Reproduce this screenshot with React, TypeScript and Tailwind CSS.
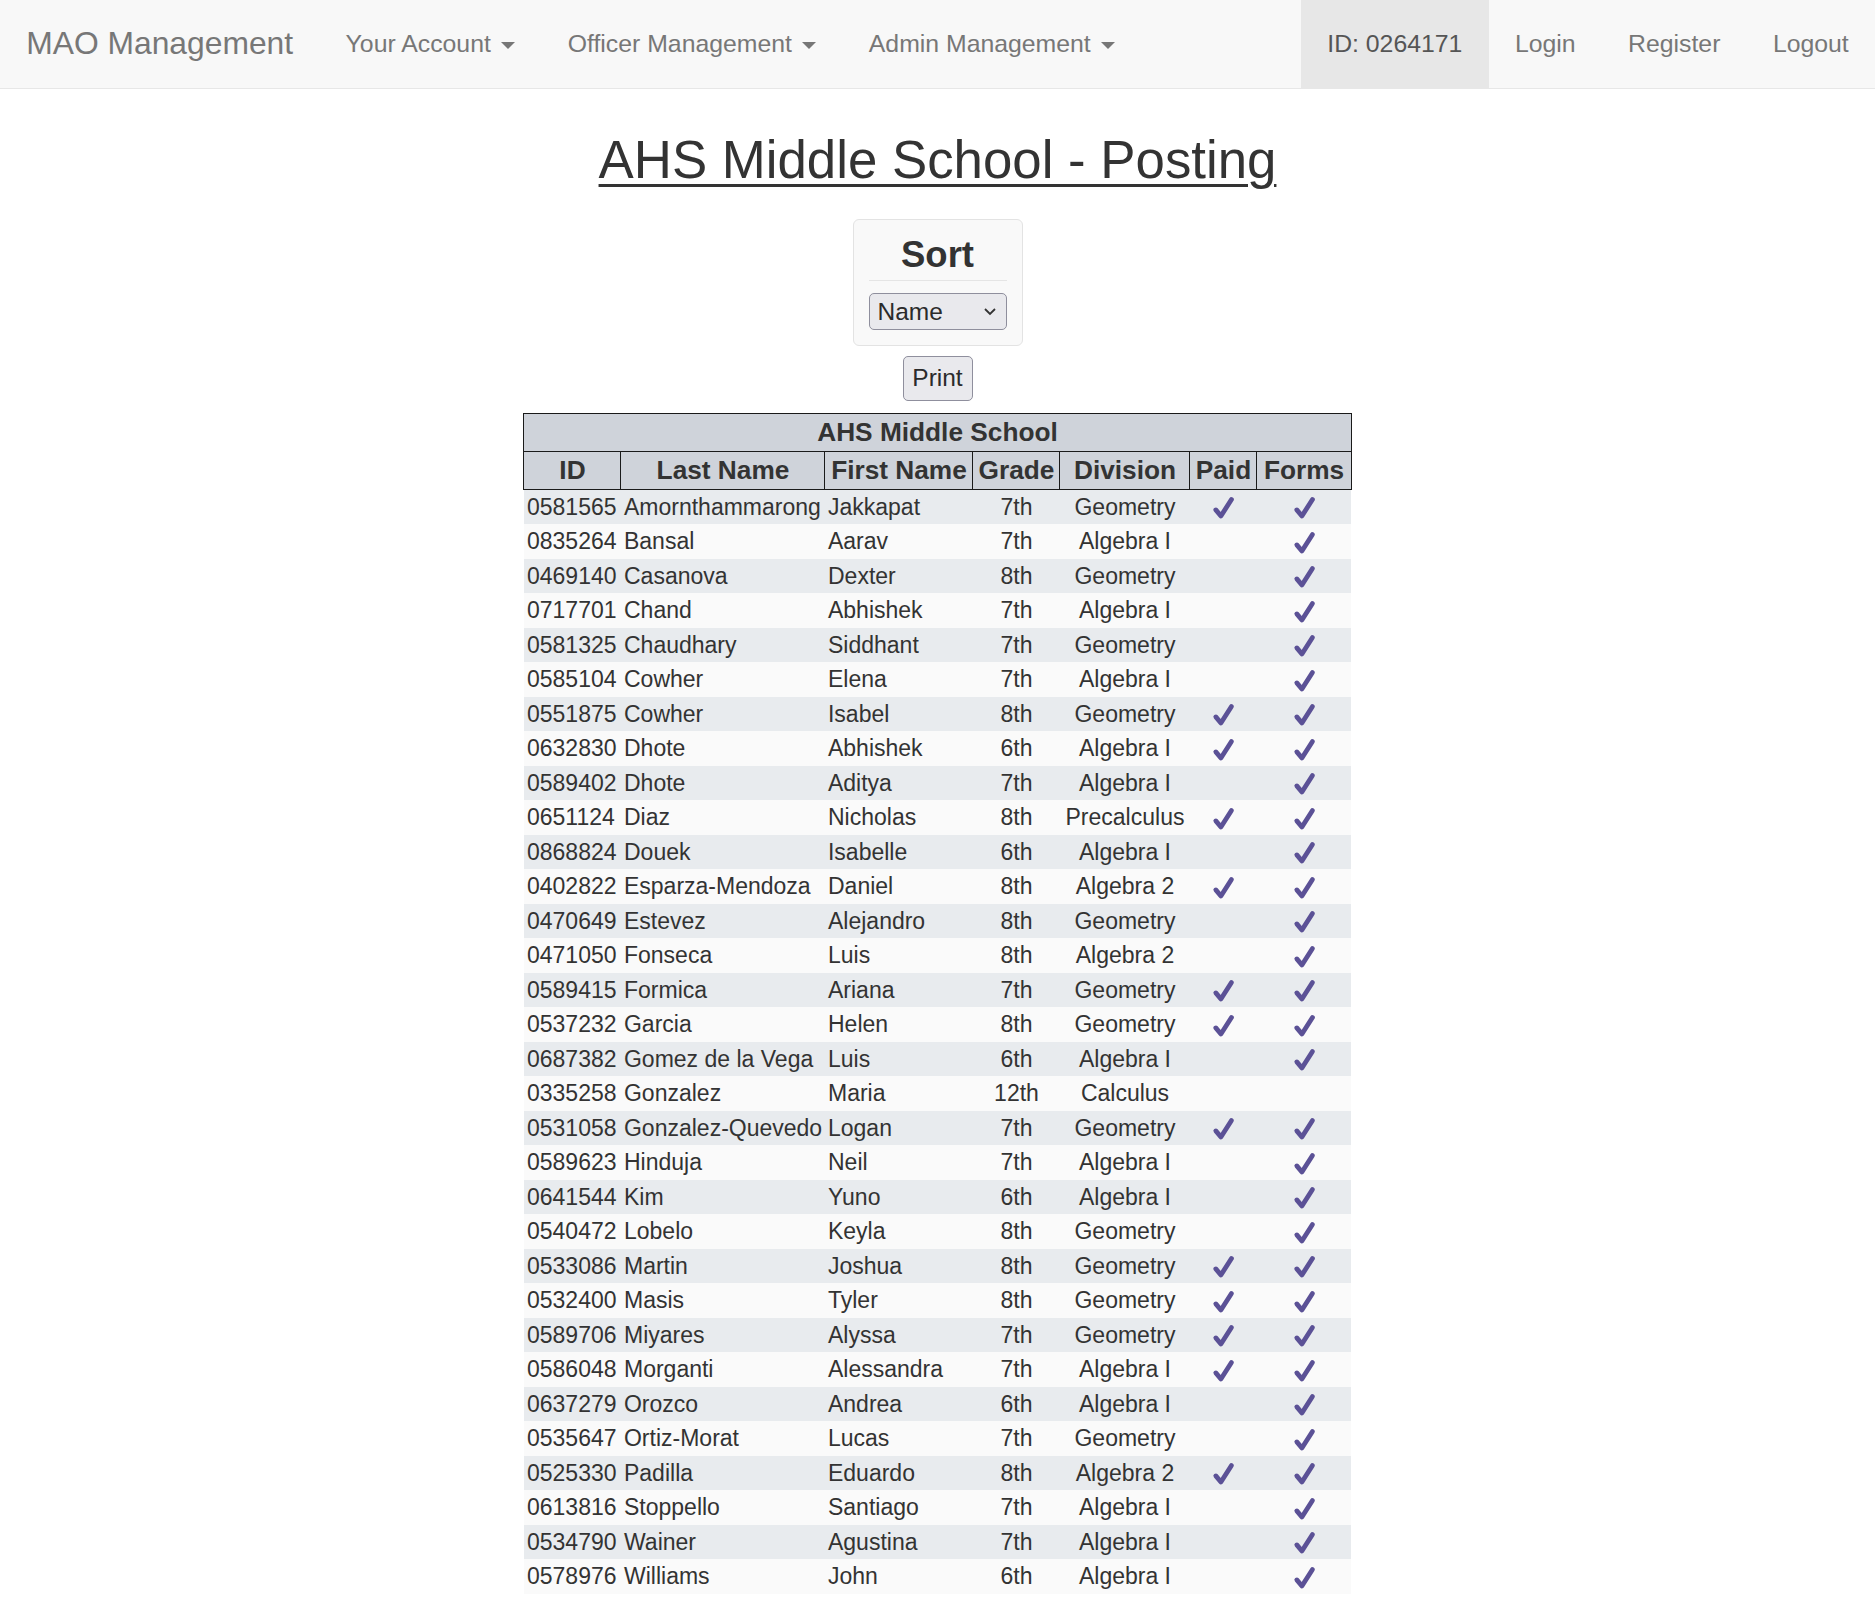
import React from "react";

type Student = {
  id: string;
  last: string;
  first: string;
  grade: string;
  division: string;
  paid: boolean;
  forms: boolean;
};

const students: Student[] = [
  { id: "0581565", last: "Amornthammarong", first: "Jakkapat", grade: "7th", division: "Geometry", paid: true, forms: true },
  { id: "0835264", last: "Bansal", first: "Aarav", grade: "7th", division: "Algebra I", paid: false, forms: true },
  { id: "0469140", last: "Casanova", first: "Dexter", grade: "8th", division: "Geometry", paid: false, forms: true },
  { id: "0717701", last: "Chand", first: "Abhishek", grade: "7th", division: "Algebra I", paid: false, forms: true },
  { id: "0581325", last: "Chaudhary", first: "Siddhant", grade: "7th", division: "Geometry", paid: false, forms: true },
  { id: "0585104", last: "Cowher", first: "Elena", grade: "7th", division: "Algebra I", paid: false, forms: true },
  { id: "0551875", last: "Cowher", first: "Isabel", grade: "8th", division: "Geometry", paid: true, forms: true },
  { id: "0632830", last: "Dhote", first: "Abhishek", grade: "6th", division: "Algebra I", paid: true, forms: true },
  { id: "0589402", last: "Dhote", first: "Aditya", grade: "7th", division: "Algebra I", paid: false, forms: true },
  { id: "0651124", last: "Diaz", first: "Nicholas", grade: "8th", division: "Precalculus", paid: true, forms: true },
  { id: "0868824", last: "Douek", first: "Isabelle", grade: "6th", division: "Algebra I", paid: false, forms: true },
  { id: "0402822", last: "Esparza-Mendoza", first: "Daniel", grade: "8th", division: "Algebra 2", paid: true, forms: true },
  { id: "0470649", last: "Estevez", first: "Alejandro", grade: "8th", division: "Geometry", paid: false, forms: true },
  { id: "0471050", last: "Fonseca", first: "Luis", grade: "8th", division: "Algebra 2", paid: false, forms: true },
  { id: "0589415", last: "Formica", first: "Ariana", grade: "7th", division: "Geometry", paid: true, forms: true },
  { id: "0537232", last: "Garcia", first: "Helen", grade: "8th", division: "Geometry", paid: true, forms: true },
  { id: "0687382", last: "Gomez de la Vega", first: "Luis", grade: "6th", division: "Algebra I", paid: false, forms: true },
  { id: "0335258", last: "Gonzalez", first: "Maria", grade: "12th", division: "Calculus", paid: false, forms: false },
  { id: "0531058", last: "Gonzalez-Quevedo", first: "Logan", grade: "7th", division: "Geometry", paid: true, forms: true },
  { id: "0589623", last: "Hinduja", first: "Neil", grade: "7th", division: "Algebra I", paid: false, forms: true },
  { id: "0641544", last: "Kim", first: "Yuno", grade: "6th", division: "Algebra I", paid: false, forms: true },
  { id: "0540472", last: "Lobelo", first: "Keyla", grade: "8th", division: "Geometry", paid: false, forms: true },
  { id: "0533086", last: "Martin", first: "Joshua", grade: "8th", division: "Geometry", paid: true, forms: true },
  { id: "0532400", last: "Masis", first: "Tyler", grade: "8th", division: "Geometry", paid: true, forms: true },
  { id: "0589706", last: "Miyares", first: "Alyssa", grade: "7th", division: "Geometry", paid: true, forms: true },
  { id: "0586048", last: "Morganti", first: "Alessandra", grade: "7th", division: "Algebra I", paid: true, forms: true },
  { id: "0637279", last: "Orozco", first: "Andrea", grade: "6th", division: "Algebra I", paid: false, forms: true },
  { id: "0535647", last: "Ortiz-Morat", first: "Lucas", grade: "7th", division: "Geometry", paid: false, forms: true },
  { id: "0525330", last: "Padilla", first: "Eduardo", grade: "8th", division: "Algebra 2", paid: true, forms: true },
  { id: "0613816", last: "Stoppello", first: "Santiago", grade: "7th", division: "Algebra I", paid: false, forms: true },
  { id: "0534790", last: "Wainer", first: "Agustina", grade: "7th", division: "Algebra I", paid: false, forms: true },
  { id: "0578976", last: "Williams", first: "John", grade: "6th", division: "Algebra I", paid: false, forms: true },
];

// heavy check mark like the ✔ glyph
const Check: React.FC = () => (
  <svg width="23" height="24" viewBox="0 0 24 24" className="inline-block align-middle">
    <polyline
      points="4,14 9.3,20.3 20.3,3.2"
      fill="none"
      stroke="#5b5196"
      strokeWidth="5"
      strokeLinecap="round"
      strokeLinejoin="round"
    />
  </svg>
);

const Caret: React.FC = () => (
  <span className="ml-[3.5px] inline-block h-0 w-0 border-x-[7px] border-t-[7px] border-x-transparent border-t-[#777] align-middle" />
);

const NavDrop: React.FC<{ label: string }> = ({ label }) => (
  <a href="#" className="block px-[26.25px] py-[26.25px] leading-[35px] text-[#777]">
    {label} <Caret />
  </a>
);

const App: React.FC = () => {
  return (
    <div
      className="min-h-screen bg-white text-[#333]"
      style={{ fontFamily: '"Liberation Sans", Arial, sans-serif' }}
    >
      <nav className="flex h-[88.5px] items-start justify-between border-b border-[#e7e7e7] bg-[#f8f8f8] text-[24.8px]">
        <div className="flex">
          <a href="#" className="block h-[87.5px] px-[26.25px] py-[26.25px] text-[31.8px] leading-[35px] text-[#777]">
            MAO Management
          </a>
          <NavDrop label="Your Account" />
          <NavDrop label="Officer Management" />
          <NavDrop label="Admin Management" />
        </div>
        <div className="flex">
          <span className="block bg-[#e7e7e7] px-[26.25px] py-[26.25px] leading-[35px] text-[#555]">
            ID: 0264171
          </span>
          <a href="#" className="block px-[26.25px] py-[26.25px] leading-[35px] text-[#777]">Login</a>
          <a href="#" className="block px-[26.25px] py-[26.25px] leading-[35px] text-[#777]">Register</a>
          <a href="#" className="block px-[26.25px] py-[26.25px] leading-[35px] text-[#777]">Logout</a>
        </div>
      </nav>

      <div className="flex flex-col items-center">
        <h2 className="mt-[42.5px] text-[52.8px] leading-[1.1] underline decoration-[3px] underline-offset-[6px]">
          AHS Middle School - Posting
        </h2>

        <div className="mt-[29.5px] w-[170px] rounded-[6px] border border-[#e3e3e3] bg-[#f9f9f9] p-[15px]">
          <div className="text-center text-[36.5px] font-bold leading-[40px]">Sort</div>
          <div className="mt-[5px] border-t border-[#e5e5e5]" />
          <div className="relative mt-[12px]">
            <select className="h-[37px] w-full appearance-none rounded-[5px] border border-[#8f8f9d] bg-[#e9e9ed] pl-[8px] text-[24.5px] text-[#2b2b2b]">
              <option>Name</option>
            </select>
            <svg
              width="14"
              height="10"
              viewBox="0 0 14 10"
              className="pointer-events-none absolute right-[10px] top-[14px]"
            >
              <polyline points="2,2 7,7 12,2" fill="none" stroke="#333" strokeWidth="1.8" />
            </svg>
          </div>
        </div>

        <button className="mt-[10px] h-[45px] w-[70px] rounded-[5px] border border-[#8f8f9d] bg-[#e9e9ed] text-[24.5px] text-[#2b2b2b]">
          Print
        </button>

        <table className="mt-[12px] w-[827px] table-fixed border-collapse">
          <colgroup>
            <col className="w-[97px]" />
            <col className="w-[204px]" />
            <col className="w-[148px]" />
            <col className="w-[87px]" />
            <col className="w-[130px]" />
            <col className="w-[67px]" />
            <col className="w-[94px]" />
          </colgroup>
          <thead className="bg-[#cfd3da] text-[26.25px] font-bold leading-[37px]">
            <tr>
              <th colSpan={7} className="border-[1.75px] border-[#1a1a1a] text-center">
                AHS Middle School
              </th>
            </tr>
            <tr>
              <th className="border-[1.75px] border-[#1a1a1a] text-center">ID</th>
              <th className="border-[1.75px] border-[#1a1a1a] text-center">Last Name</th>
              <th className="border-[1.75px] border-[#1a1a1a] text-center whitespace-nowrap">First Name</th>
              <th className="border-[1.75px] border-[#1a1a1a] text-center">Grade</th>
              <th className="border-[1.75px] border-[#1a1a1a] text-center">Division</th>
              <th className="border-[1.75px] border-[#1a1a1a] text-center">Paid</th>
              <th className="border-[1.75px] border-[#1a1a1a] text-center">Forms</th>
            </tr>
          </thead>
          <tbody className="text-[23px] leading-[34.5px]">
            {students.map((s, i) => (
              <tr key={s.id} className={i % 2 === 0 ? "bg-[#e8ebee]" : "bg-[#fafafa]"}>
                <td className="h-[34.5px] whitespace-nowrap px-[3px] py-0">{s.id}</td>
                <td className="whitespace-nowrap px-[3px] py-0">{s.last}</td>
                <td className="whitespace-nowrap px-[3px] py-0">{s.first}</td>
                <td className="px-[3px] py-0 text-center">{s.grade}</td>
                <td className="whitespace-nowrap px-[3px] py-0 text-center">{s.division}</td>
                <td className="px-[3px] py-0 text-center">{s.paid ? <Check /> : null}</td>
                <td className="px-[3px] py-0 text-center">{s.forms ? <Check /> : null}</td>
              </tr>
            ))}
          </tbody>
        </table>
      </div>
    </div>
  );
};

export default App;
